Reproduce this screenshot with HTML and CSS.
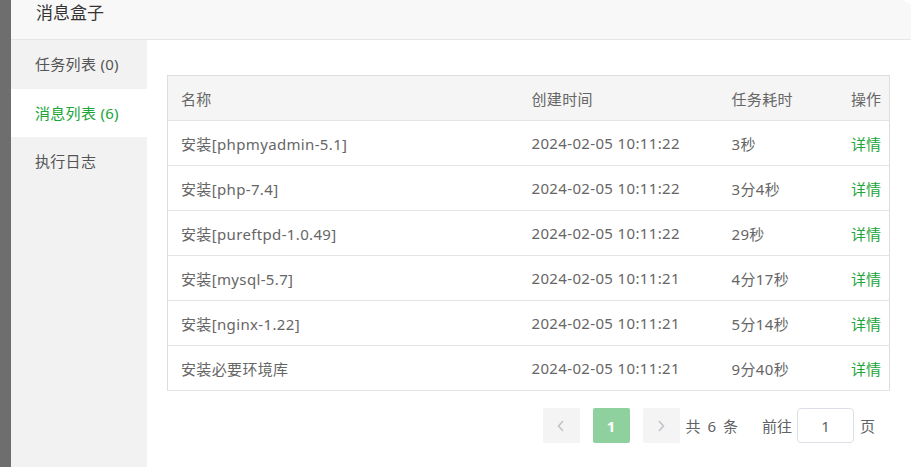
FILE: index.html
```html
<!DOCTYPE html>
<html lang="zh">
<head>
<meta charset="utf-8">
<title>消息盒子</title>
<link rel="stylesheet" href="styles.css">
</head>
<body>
<div class="shade"></div>
<div class="dialog">
  <div class="close-dot"></div>
  <div class="dialog-head">消息盒子</div>
  <div class="dialog-body">
    <ul class="side">
      <li class="side-item">任务列表 (0)</li>
      <li class="side-item active">消息列表 (6)</li>
      <li class="side-item">执行日志</li>
    </ul>
    <div class="main">
      <table class="grid">
        <colgroup>
          <col class="c-name"><col class="c-time"><col class="c-cost"><col class="c-op">
        </colgroup>
        <thead>
          <tr><th>名称</th><th>创建时间</th><th>任务耗时</th><th class="op">操作</th></tr>
        </thead>
        <tbody>
          <tr><td>安装[phpmyadmin-5.1]</td><td>2024-02-05 10:11:22</td><td>3秒</td><td class="op"><a class="link">详情</a></td></tr>
          <tr><td>安装[php-7.4]</td><td>2024-02-05 10:11:22</td><td>3分4秒</td><td class="op"><a class="link">详情</a></td></tr>
          <tr><td>安装[pureftpd-1.0.49]</td><td>2024-02-05 10:11:22</td><td>29秒</td><td class="op"><a class="link">详情</a></td></tr>
          <tr><td>安装[mysql-5.7]</td><td>2024-02-05 10:11:21</td><td>4分17秒</td><td class="op"><a class="link">详情</a></td></tr>
          <tr><td>安装[nginx-1.22]</td><td>2024-02-05 10:11:21</td><td>5分14秒</td><td class="op"><a class="link">详情</a></td></tr>
          <tr><td>安装必要环境库</td><td>2024-02-05 10:11:21</td><td>9分40秒</td><td class="op"><a class="link">详情</a></td></tr>
        </tbody>
      </table>
      <div class="pager">
        <button class="pg-btn nav" aria-label="上一页">
          <svg width="10" height="12" viewBox="0 0 10 12"><path d="M7 1 L2.5 6 L7 11" fill="none" stroke="#c0c4cc" stroke-width="1.6"/></svg>
        </button>
        <button class="pg-btn current">1</button>
        <button class="pg-btn nav last" aria-label="下一页">
          <svg width="10" height="12" viewBox="0 0 10 12"><path d="M3 1 L7.5 6 L3 11" fill="none" stroke="#c0c4cc" stroke-width="1.6"/></svg>
        </button>
        <span class="total">共 6 条</span>
        <span class="jump">前往<input class="jump-input" value="1">页</span>
      </div>
    </div>
  </div>
</div>
</body>
</html>
```

FILE: styles.css
```css
* { box-sizing: border-box; }
html, body { margin: 0; height: 100%; }
body {
  display: flex;
  background: #6e6e6e;
  font-family: "Noto Sans", "Noto Sans CJK SC", sans-serif;
  font-size: 15px;
  color: #666;
  overflow: hidden;
}
.shade { width: 11px; flex: none; }
.dialog {
  position: relative;
  flex: 1;
  display: flex;
  flex-direction: column;
  background: #fff;
  height: 467px;
}
.close-dot {
  position: absolute;
  left: 887px;
  top: -28px;
  width: 32px;
  height: 32px;
  border-radius: 50%;
  background: #fff;
}
.dialog-head {
  height: 40px;
  flex: none;
  background: #f8f8f8;
  border-bottom: 1px solid #e6e6e6;
  padding-left: 25px;
  font-size: 17px;
  line-height: 26px;
  color: #333;
}
.dialog-body { flex: 1; display: flex; }
.side {
  width: 136px;
  flex: none;
  margin: 0;
  padding: 0;
  list-style: none;
  background: #f2f2f2;
}
.side-item {
  height: 48.7px;
  line-height: 48px;
  padding-left: 24px;
  color: #555;
  font-size: 15px;
  letter-spacing: 0.3px;
}
.side-item.active { background: #fff; color: #20a53a; }
.main { flex: 1; padding: 35px 21px 0 20px; }
.grid {
  width: 100%;
  border-collapse: collapse;
  border: 1px solid #ddd;
  table-layout: fixed;
}
.c-name { width: 351px; }
.c-time { width: 200px; }
.c-cost { width: 119px; }
.grid th, .grid td {
  height: 45px;
  padding: 0 0 0 13px;
  text-align: left;
  font-weight: normal;
  font-size: 15px;
  letter-spacing: 0.35px;
  color: #666;
  border-bottom: 1px solid #e4e4e4;
  white-space: nowrap;
}
.grid thead tr { background: #f5f5f5; }
.grid .op { text-align: right; padding: 0 8px 0 0; letter-spacing: 0; }
.link { color: #20a53a; }
.pager {
  display: flex;
  align-items: center;
  justify-content: flex-end;
  margin-top: 17px;
  padding-right: 15px;
  color: #606266;
}
.pg-btn {
  width: 37px;
  height: 35px;
  margin-right: 13px;
  border: 0;
  border-radius: 2px;
  background: #f4f4f5;
  display: flex;
  align-items: center;
  justify-content: center;
  padding: 0;
  font-family: inherit;
  font-size: 15px;
}
.pg-btn.current { background: #8fd19e; color: #fff; font-weight: bold; }
.pg-btn.last { margin-right: 6px; }
.total { font-size: 15px; word-spacing: 3px; margin-right: 24px; }
.jump { display: flex; align-items: center; font-size: 15px; }
.jump-input {
  width: 57px;
  height: 35px;
  margin: 0 6px 0 5px;
  border: 1px solid #dcdfe6;
  border-radius: 4px;
  text-align: center;
  font-family: inherit;
  font-size: 15px;
  color: #606266;
}
```
